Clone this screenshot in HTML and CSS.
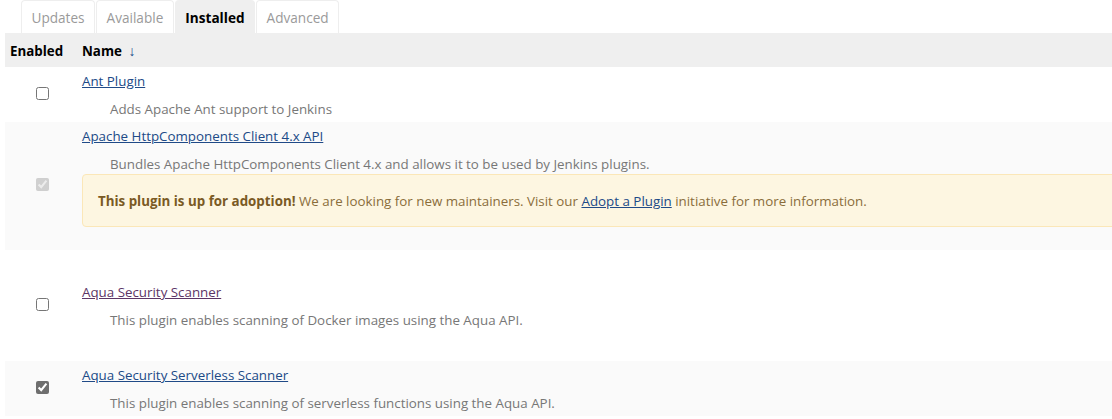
FILE: index.html
```html
<!DOCTYPE html>
<html>
<head>
<meta charset="utf-8">
<link rel="stylesheet" href="styles.css">
</head>
<body>
<div class="page">
  <div class="tabs">
    <a class="tab">Updates</a>
    <a class="tab">Available</a>
    <a class="tab active">Installed</a>
    <a class="tab">Advanced</a>
  </div>
  <table class="plugins">
    <thead>
      <tr>
        <th class="col-enabled">Enabled</th>
        <th class="col-name">Name <span class="sort">↓</span></th>
      </tr>
    </thead>
    <tbody>
      <tr class="row">
        <td class="cb"><input type="checkbox"></td>
        <td class="info">
          <a class="plink" href="#">Ant Plugin</a>
          <div class="desc">Adds Apache Ant support to Jenkins</div>
        </td>
      </tr>
      <tr class="row alt">
        <td class="cb"><input type="checkbox" checked disabled></td>
        <td class="info">
          <a class="plink" href="#">Apache HttpComponents Client 4.x API</a>
          <div class="desc">Bundles Apache HttpComponents Client 4.x and allows it to be used by Jenkins plugins.</div>
          <div class="adopt"><strong>This plugin is up for adoption!</strong> We are looking for new maintainers. Visit our <a href="#">Adopt a Plugin</a> initiative for more information.</div>
        </td>
      </tr>
      <tr class="row tall">
        <td class="cb"><input type="checkbox"></td>
        <td class="info">
          <a class="plink visited" href="#">Aqua Security Scanner</a>
          <div class="desc">This plugin enables scanning of Docker images using the Aqua API.</div>
        </td>
      </tr>
      <tr class="row alt">
        <td class="cb"><input type="checkbox" checked></td>
        <td class="info">
          <a class="plink" href="#">Aqua Security Serverless Scanner</a>
          <div class="desc">This plugin enables scanning of serverless functions using the Aqua API.</div>
        </td>
      </tr>
    </tbody>
  </table>
</div>
</body>
</html>
```
FILE: styles.css
```css
html, body {
  margin: 0;
  padding: 0;
  background: #fff;
  overflow: hidden;
}
body {
  font-family: "Open Sans", "Noto Sans", sans-serif;
  font-size: 13.35px;
  color: #333;
}
.page {
  padding-left: 5px;
  width: 1200px;
}
.tabs {
  display: flex;
  gap: 1px;
  margin-left: 16px;
  height: 33px;
}
.tab {
  display: flex;
  align-items: center;
  padding: 0 9.5px;
  border: 1px solid #eee;
  border-bottom: none;
  border-radius: 4px 4px 0 0;
  color: #9a9a9a;
  font-size: 13.6px;
}
.tab.active {
  background: #efefef;
  border-color: #efefef;
  color: #000;
  font-weight: 700;
}
.plugins {
  border-collapse: collapse;
  width: 100%;
}
thead tr {
  background: #efefef;
  height: 34px;
}
th {
  text-align: left;
  font-weight: 700;
  color: #000;
  font-size: 13.35px;
  padding: 0;
  line-height: 20px;
  padding-top: 1px;
}
.col-enabled {
  width: 72px;
  padding-left: 5px;
}
.col-name {
  padding-left: 0;
}
.sort {
  color: #204a87;
  font-weight: 400;
  font-size: 14px;
  margin-left: 3px;
}
.row.alt {
  background: #fafafa;
}
.cb {
  text-align: center;
  vertical-align: middle;
  padding: 0 3px 0 0;
}
.cb input {
  width: 13px;
  height: 13px;
  margin: 0;
  accent-color: #6e6e6e;
}
.info {
  padding: 4px 0 3px 0;
  vertical-align: top;
}
.row.tall .info {
  padding-top: 32px;
  padding-bottom: 31px;
}
.plink {
  color: #204a87;
  line-height: 20px;
}
.plink.visited {
  color: #5c3566;
}
.desc {
  padding-left: 28px;
  margin-top: 8px;
  color: #777;
  line-height: 20px;
}
.adopt {
  margin: 0 0 20px 0;
  background: #fdf6e1;
  border: 1px solid #fbe7b8;
  border-radius: 4px;
  padding: 0 15px;
  height: 51px;
  display: flex;
  align-items: center;
  color: #8a6d3b;
  white-space: pre;
}
.adopt strong {
  color: #7a5a24;
}
.adopt a {
  color: #204a87;
}
```
